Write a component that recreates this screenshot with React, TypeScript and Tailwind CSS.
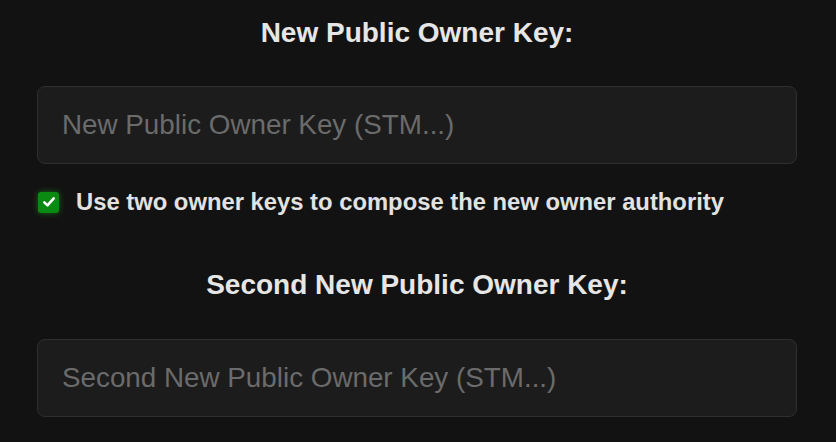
import React from "react";

export default function App() {
  const font = { fontFamily: '"Liberation Sans", Arial, sans-serif' };
  return (
    <div className="w-[836px] h-[442px] bg-[#121212] overflow-hidden" style={font}>
      <div className="pl-[37px] pr-[39px] pt-[17px] flex flex-col">
        <h2 className="text-center text-[28px] leading-[32px] font-bold text-[#e6e6e6]">
          New Public Owner Key:
        </h2>
        <input
          type="text"
          placeholder="New Public Owner Key (STM...)"
          className="mt-[37px] h-[78px] w-full rounded-[8px] border border-[#2f2f2f] bg-[#1c1c1c] px-[24px] text-[27.8px] text-[#e6e6e6] placeholder:text-[#6b6b6b] outline-none"
          style={font}
        />
        <label className="mt-[26px] flex items-center gap-[17px] pl-[1px] h-[24px]">
          <span className="w-[21px] h-[21px] rounded-[3px] bg-[#0b8a12] flex items-center justify-center shadow-[0_0_6px_rgba(40,200,40,0.45)]">
            <svg width="14" height="14" viewBox="0 0 14 14" fill="none">
              <path d="M2.3 7.4 L5.5 10.4 L11.7 3.4" stroke="white" strokeWidth="2.6" strokeLinecap="round" strokeLinejoin="round" />
            </svg>
          </span>
          <span className="text-[23.8px] leading-[24px] font-bold text-[#e2e2e2]">
            Use two owner keys to compose the new owner authority
          </span>
        </label>
        <h2 className="mt-[55px] text-center text-[28px] leading-[32px] font-bold text-[#e6e6e6]">
          Second New Public Owner Key:
        </h2>
        <input
          type="text"
          placeholder="Second New Public Owner Key (STM...)"
          className="mt-[38px] h-[78px] w-full rounded-[8px] border border-[#2f2f2f] bg-[#1c1c1c] px-[24px] text-[27.8px] text-[#e6e6e6] placeholder:text-[#6b6b6b] outline-none"
          style={font}
        />
      </div>
    </div>
  );
}
